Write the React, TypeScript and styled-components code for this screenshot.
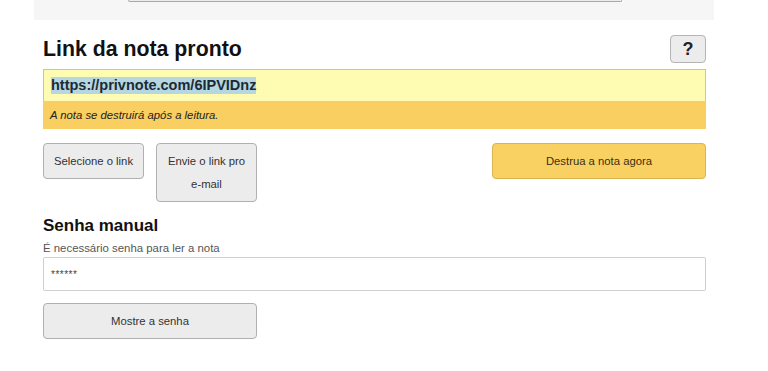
import styled, { createGlobalStyle } from "styled-components"

const GlobalStyle = createGlobalStyle`
  html, body {
    margin: 0;
    padding: 0;
    background: #ffffff;
  }
  body {
    font-family: "Liberation Sans", Arial, sans-serif;
    color: #222;
  }
`

const Page = styled.div`
  width: 680px;
  margin-left: 34px;
`

const TopPanel = styled.div`
  background: #f6f6f6;
  padding: 0 0 18px 94px;
`

const CutButton = styled.div`
  width: 492px;
  height: 1px;
  background: #ececec;
  border: 1px solid #a9a9a9;
  border-top: none;
  border-radius: 0 0 4px 4px;
`

const Content = styled.div`
  padding: 0 8px 0 9px;
  display: flex;
  flex-direction: column;
`

const HeaderRow = styled.div`
  margin-top: 15px;
  height: 28px;
  display: flex;
  flex-direction: row;
  align-items: center;
  justify-content: space-between;
`

const Title = styled.h2`
  margin: 0;
  font-size: 21.3px;
  line-height: 28px;
  font-weight: bold;
  color: #111;
`

const HelpButton = styled.button`
  width: 36px;
  height: 28px;
  padding: 0;
  background: #ececec;
  border: 1px solid #b4b4b4;
  border-radius: 4px;
  font-family: "Liberation Sans", Arial, sans-serif;
  font-size: 18px;
  font-weight: bold;
  color: #222;
`

const LinkBox = styled.div`
  margin-top: 6px;
  display: flex;
  flex-direction: column;
`

const LinkField = styled.div`
  height: 31px;
  background: #fefbb2;
  border: 1px solid #c8c6a4;
  border-bottom: none;
  padding-left: 7px;
  display: flex;
  align-items: center;
`

const Selected = styled.span`
  background: #b6d7e1;
  font-size: 14.5px;
  font-weight: bold;
  line-height: 17px;
  color: #1c2a36;
`

const Warning = styled.div`
  height: 28px;
  background: #f8cf60;
  padding-left: 7px;
  display: flex;
  align-items: center;
  font-size: 11.3px;
  font-style: italic;
  color: #222;
`

const ButtonRow = styled.div`
  margin-top: 14px;
  display: flex;
  flex-direction: row;
  align-items: flex-start;
  gap: 12px;
`

const Button = styled.button<{ $width: number; $primary?: boolean }>`
  width: ${p => p.$width}px;
  min-height: 36px;
  padding: 5.5px 8px;
  background: ${p => (p.$primary ? "#f9d163" : "#ececec")};
  border: 1px solid ${p => (p.$primary ? "#d9b452" : "#b0b0b0")};
  border-radius: 4px;
  font-family: "Liberation Sans", Arial, sans-serif;
  font-size: 11.3px;
  line-height: 23px;
  color: ${p => (p.$primary ? "#3a3010" : "#333")};
  text-align: center;
  box-sizing: border-box;
`

const Spacer = styled.div`
  flex: 1;
`

const SubTitle = styled.h3`
  margin: 14px 0 0 0;
  font-size: 17px;
  line-height: 20px;
  font-weight: bold;
  color: #111;
`

const Hint = styled.div`
  margin-top: 5px;
  font-size: 11.4px;
  line-height: 14px;
  color: #555;
`

const PasswordInput = styled.div`
  margin-top: 2px;
  height: 32px;
  border: 1px solid #cfcfcf;
  border-radius: 2px;
  padding-left: 7px;
  display: flex;
  align-items: center;
  font-size: 10px;
  letter-spacing: 0.5px;
  color: #444;
`

const ShowRow = styled.div`
  margin-top: 12px;
  display: flex;
`

export default function App() {
  return (
    <>
      <GlobalStyle />
      <Page>
        <TopPanel>
          <CutButton />
        </TopPanel>
        <Content>
          <HeaderRow>
            <Title>Link da nota pronto</Title>
            <HelpButton>?</HelpButton>
          </HeaderRow>
          <LinkBox>
            <LinkField>
              <Selected>https://privnote.com/6IPVIDnz</Selected>
            </LinkField>
            <Warning>A nota se destruirá após a leitura.</Warning>
          </LinkBox>
          <ButtonRow>
            <Button $width={101}>Selecione o link</Button>
            <Button $width={101}>Envie o link pro e-mail</Button>
            <Spacer />
            <Button $width={214} $primary>Destrua a nota agora</Button>
          </ButtonRow>
          <SubTitle>Senha manual</SubTitle>
          <Hint>É necessário senha para ler a nota</Hint>
          <PasswordInput>******</PasswordInput>
          <ShowRow>
            <Button $width={214}>Mostre a senha</Button>
          </ShowRow>
        </Content>
      </Page>
    </>
  )
}
